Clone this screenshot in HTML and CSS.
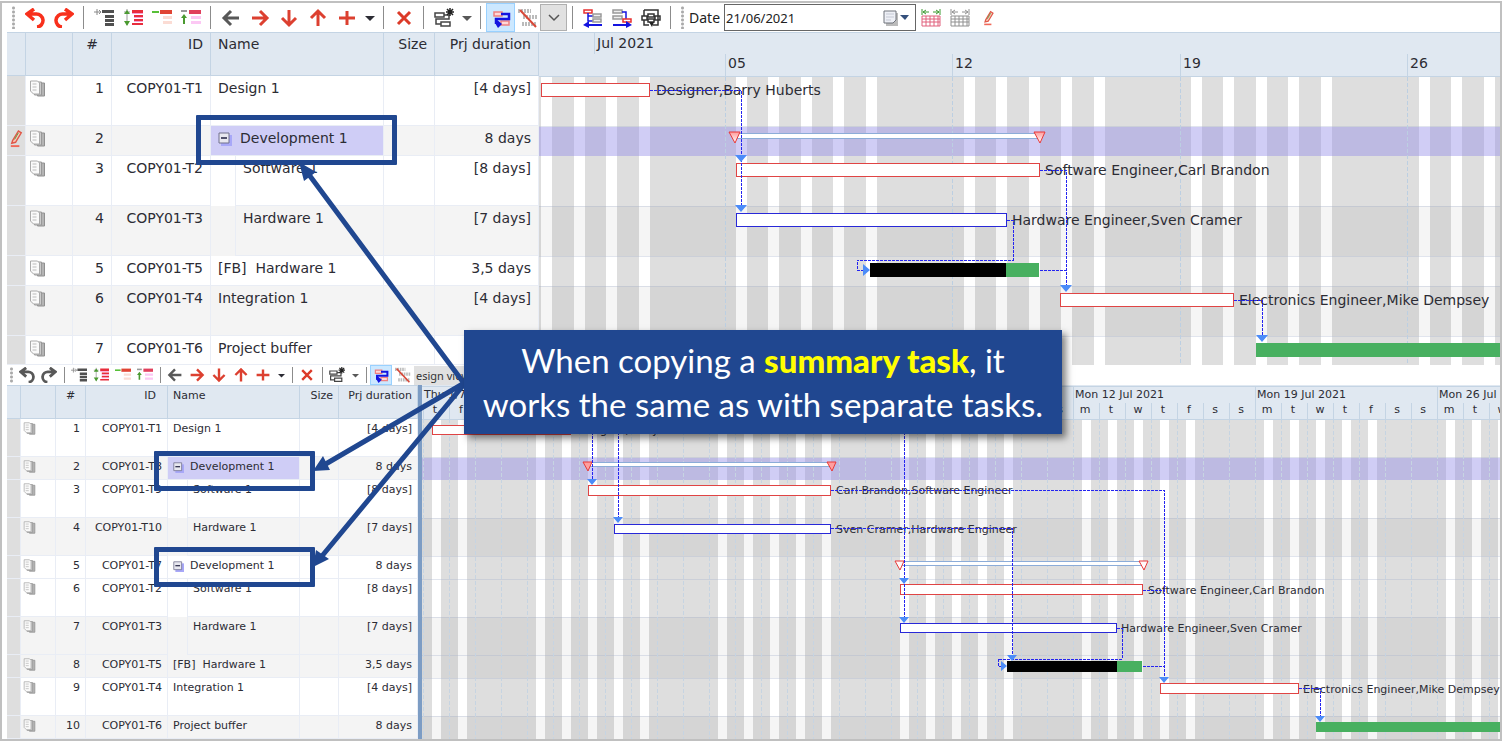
FILE: index.html
```html
<!DOCTYPE html>
<html lang="en">
<head>
<meta charset="utf-8">
<title>Copying a summary task</title>
<link rel="stylesheet" href="styles.css">
</head>
<body>
<svg class="sprite" aria-hidden="true">
  <symbol id="undo" viewBox="0 0 20 20"><path d="M9 1 2 6l7 6M2 6h9a6 6 0 0 1 1 13" fill="none" stroke="currentColor" stroke-width="3.500"/></symbol>
  <symbol id="redo" viewBox="0 0 20 20"><path d="m11 1 7 5-7 6M18 6H9a6 6 0 0 0-1 13" fill="none" stroke="currentColor" stroke-width="3.500"/></symbol>
  <symbol id="task-add" viewBox="0 0 20 20"><path d="M0 4h7M3 1v6M5 2l2 2-2 2" stroke="#888" fill="none"/><path d="M8 2h12v3H8zM11 7h9v3h-9zM11 11h9v3h-9zM11 15h9v3h-9z" fill="#505050"/></symbol>
  <symbol id="task-expand" viewBox="0 0 20 20"><path d="M1 4h6M4 1v16" stroke="#999" fill="none"/><path d="M4 2 1 6h6zM4 18l-3-5h6z" fill="#4a9a30"/><path d="M9 2h11v3H9zM11 7h9v2h-9zM11 11h9v2h-9zM9 15h11v2H9z" fill="#e82c3c"/><path d="M9 5h11v1H9zM11 9h9v1h-9zM11 13h9v1h-9z" fill="#f5a0d8"/></symbol>
  <symbol id="task-out" viewBox="0 0 20 20"><path d="M0 4h7" stroke="#58c038" stroke-width="2"/><path d="M8 2h12v4H8z" fill="#e04434"/><path d="M11 8h9v3h-9zM11 13h9v3h-9z" fill="#fbdcd4"/></symbol>
  <symbol id="task-up" viewBox="0 0 20 20"><path d="M0 3h6" stroke="#999" stroke-width="2"/><path d="M3 6 0 10h2v6h2v-6h2z" fill="#4a9a30"/><path d="M8 2h12v4H8z" fill="#e0405c"/><path d="M10 8h10v3H10zM10 13h10v3H10z" fill="#fcc8f4"/></symbol>
  <symbol id="arrow" viewBox="0 0 20 20"><path d="M3 10h15M10 3l-7 7 7 7" fill="none" stroke="currentColor" stroke-width="3"/></symbol>
  <symbol id="plus" viewBox="0 0 20 20"><path d="M2 10h16M10 3v14" stroke="currentColor" stroke-width="3"/></symbol>
  <symbol id="cross" viewBox="0 0 20 20"><path d="m4 4 12 12M16 4 4 16" stroke="#dc3a28" stroke-width="3"/></symbol>
  <symbol id="caret" viewBox="0 0 10 10"><path d="M0 3h10L5 8z" fill="currentColor"/></symbol>
  <symbol id="chain" viewBox="0 0 20 20"><path d="M1 5h9v4H1zM7 14h9v4H7zM10 7h5v4H2v5h5" fill="#fff" stroke="#444" stroke-width="1.500"/><path d="M16 0v8M12 4h8M13 1l6 6M19 1l-6 6" stroke="#222" stroke-width="1.500"/></symbol>
  <symbol id="links" viewBox="0 0 20 20"><path d="M3 4h8v4H3zM10 13h8v4h-8z" fill="#ffd8d8" stroke="#f08080" stroke-width="1.500"/><path d="M10 6h8v5H5v5" fill="none" stroke="#1414e0" stroke-width="2.500"/><path d="M4 15V10l7 6-4 4z" fill="#1414e0"/></symbol>
  <symbol id="strike" viewBox="0 0 20 20"><path d="M0 3h13M5 9h14M4 16h15" fill="none" stroke="#bbb" stroke-width="4" stroke-dasharray="2 1"/><path d="M2 2 18 19" stroke="#d84838" stroke-width="2"/></symbol>
  <symbol id="pred" viewBox="0 0 20 20"><path d="M1 2h8v3H1z" fill="#fff" stroke="#e83030" stroke-width="1.500"/><path d="M5 5v8h5M5 8h5" fill="none" stroke="#1414e0" stroke-width="1.500"/><path d="M10 6h8v3h-8zM10 11h8v3h-8z" fill="#eee" stroke="#999" stroke-width="1.500"/><path d="M4 17h15" stroke="#1414e0" stroke-width="2"/><path d="M6 13v7l-6-3z" fill="#1414e0"/></symbol>
  <symbol id="succ" viewBox="0 0 20 20"><path d="M1 2h9v3H1zM1 8h9v3H1z" fill="#eee" stroke="#999" stroke-width="1.500"/><path d="M10 4h4v7" fill="none" stroke="#1414e0" stroke-width="1.500"/><path d="M11 11h8v3h-8z" fill="#fff" stroke="#e83030" stroke-width="1.500"/><path d="M1 17h15" stroke="#1414e0" stroke-width="2"/><path d="M14 13v7l6-3z" fill="#1414e0"/></symbol>
  <symbol id="net" viewBox="0 0 20 20"><path d="M3 2h14v4M3 2v6M17 6v11h-5M3 12v5h5M1 8h5v4H1zM14 8h5v4h-5zM7 6h6v3H7zM7 11h6v3H7z" fill="none" stroke="#333" stroke-width="1.500"/><path d="M8 14h5l-2 5z" fill="#222"/></symbol>
  <symbol id="cal" viewBox="0 0 20 20"><path d="M1 8h18v10H1zM1 11h18M1 14h18M5 8v10M9 8v10M13 8v10M17 8v10" fill="none" stroke="currentColor"/></symbol>
  <symbol id="cal-arrows" viewBox="0 0 20 20"><path d="M1 1v6M19 1v6M2 4h6M12 4h6M5 2 2 4l3 2M15 2l3 2-3 2" fill="none" stroke="currentColor"/></symbol>
  <symbol id="pencil" viewBox="0 0 20 20"><path d="M6 12 12 2l3 2-6 10-4 1z" fill="#f8c8b8" stroke="#e05848" stroke-width="1.500"/><path d="M8 11l4-7" stroke="#5a9a40"/><path d="M4 18h9" stroke="#f06858" stroke-width="2"/></symbol>
  <symbol id="doc" viewBox="0 0 16 17"><path d="M8 3h7v13H8z" fill="#b4b4b4" stroke="#909090"/><path d="M5 2h7v13H5z" fill="#ccc" stroke="#999"/><path d="M1 1h7l2 2v11H4l-3-3z" fill="#fafafa" stroke="#aaa"/><path d="M3 4h4M3 7h4M3 10h4" stroke="#bbb"/></symbol>
  <symbol id="collapse" viewBox="0 0 14 14"><path d="M3 3h11v11H3z" fill="#a8a8f8"/><path d="M1 1h10v10H1z" fill="#e8e8f0" stroke="#70708c"/><path d="M3 6h6" stroke="#202040" stroke-width="1.500"/></symbol>
</svg>

<main class="frame">
  <section class="pane pane-large">
    <div class="toolbar">
      <span class="grip"></span>
      <button class="tool red" aria-label="Undo"><svg class="icon"><use href="#undo"/></svg></button>
      <button class="tool red" aria-label="Redo"><svg class="icon"><use href="#redo"/></svg></button>
      <span class="sep"></span>
      <button class="tool" aria-label="Insert task"><svg class="icon"><use href="#task-add"/></svg></button>
      <button class="tool" aria-label="Expand tasks"><svg class="icon"><use href="#task-expand"/></svg></button>
      <button class="tool" aria-label="Outdent task"><svg class="icon"><use href="#task-out"/></svg></button>
      <button class="tool" aria-label="Raise task"><svg class="icon"><use href="#task-up"/></svg></button>
      <span class="sep"></span>
      <button class="tool gray" aria-label="Left"><svg class="icon"><use href="#arrow"/></svg></button>
      <button class="tool brick" aria-label="Right"><svg class="icon turn-right"><use href="#arrow"/></svg></button>
      <button class="tool brick" aria-label="Down"><svg class="icon turn-down"><use href="#arrow"/></svg></button>
      <button class="tool brick" aria-label="Up"><svg class="icon turn-up"><use href="#arrow"/></svg></button>
      <button class="tool brick" aria-label="Add"><svg class="icon"><use href="#plus"/></svg></button>
      <button class="drop" aria-label="Add options"><svg class="caret"><use href="#caret"/></svg></button>
      <span class="sep"></span>
      <button class="tool" aria-label="Delete"><svg class="icon"><use href="#cross"/></svg></button>
      <span class="sep"></span>
      <button class="tool" aria-label="Add chain"><svg class="icon"><use href="#chain"/></svg></button>
      <button class="drop gray" aria-label="Chain options"><svg class="caret"><use href="#caret"/></svg></button>
      <span class="sep"></span>
      <button class="tool pressed" aria-label="Show links"><svg class="icon"><use href="#links"/></svg></button>
      <button class="tool slim" aria-label="Hide views"><svg class="icon"><use href="#strike"/></svg></button>
      <button class="chooser" aria-label="Choose view"><svg class="chev" viewBox="0 0 12 12"><path d="m1 3 5 5 5-5" fill="none" stroke="#555" stroke-width="1.500"/></svg></button>
      <span class="sep"></span>
      <button class="tool" aria-label="Predecessors"><svg class="icon"><use href="#pred"/></svg></button>
      <button class="tool" aria-label="Successors"><svg class="icon"><use href="#succ"/></svg></button>
      <button class="tool" aria-label="Network"><svg class="icon"><use href="#net"/></svg></button>
      <span class="sep"></span>
      <span class="grip"></span>
      <label class="date-label" for="date">Date</label>
      <span class="date-field">
        <input id="date" class="date-input" type="text" value="21/06/2021">
        <svg class="date-icon" viewBox="0 0 28 18"><path d="M4 4h12v13H4z" fill="#bbb"/><path d="M2 2h12v9l-3 3H2z" fill="#eef0f6" stroke="#70747c"/><path d="M4 5h8M4 8h8M4 11h5" stroke="#c4c8d4"/><path d="M18 6h9l-4 5z" fill="#34507c"/></svg>
      </span>
      <button class="tool" aria-label="Fit calendar"><svg class="icon"><g color="#e0607c"><use href="#cal"/></g><g color="#3a9a30"><use href="#cal-arrows"/></g></svg></button>
      <button class="tool gray-light" aria-label="Shrink calendar"><svg class="icon"><use href="#cal"/><use href="#cal-arrows"/></svg></button>
      <button class="tool" aria-label="Edit"><svg class="icon small"><use href="#pencil"/></svg></button>
    </div>
    <div class="split">
      <table class="tasks">
        <colgroup><col class="c-mark"><col class="c-doc"><col class="c-num"><col class="c-id"><col class="c-name"><col class="c-size"><col class="c-dur"></colgroup>
        <thead><tr><th></th><th></th><th class="mid">#</th><th class="end id-head">ID</th><th>Name</th><th class="end">Size</th><th class="end">Prj duration</th></tr></thead>
        <tbody>
          <tr class="tall"><td class="mark"></td><td class="doc"><svg><use href="#doc"/></svg></td><td class="end">1</td><td class="end">COPY01-T1</td><td>Design 1</td><td></td><td class="end">[4 days]</td></tr>
          <tr class="low alt"><td class="mark"><svg class="edit"><use href="#pencil"/></svg></td><td class="doc"><svg><use href="#doc"/></svg></td><td class="end">2</td><td></td><td class="picked"><button class="fold" aria-label="Collapse"><svg><use href="#collapse"/></svg></button>Development 1</td><td></td><td class="end">8 days</td></tr>
          <tr class="tall"><td class="mark"></td><td class="doc"><svg><use href="#doc"/></svg></td><td class="end">3</td><td class="end">COPY01-T2</td><td class="child"><div class="indent">Software 1</div></td><td></td><td class="end">[8 days]</td></tr>
          <tr class="tall alt"><td class="mark"></td><td class="doc"><svg><use href="#doc"/></svg></td><td class="end">4</td><td class="end">COPY01-T3</td><td class="child"><div class="indent">Hardware 1</div></td><td></td><td class="end">[7 days]</td></tr>
          <tr class="low"><td class="mark"></td><td class="doc"><svg><use href="#doc"/></svg></td><td class="end">5</td><td class="end">COPY01-T5</td><td>[FB]&nbsp; Hardware 1</td><td></td><td class="end">3,5 days</td></tr>
          <tr class="tall alt"><td class="mark"></td><td class="doc"><svg><use href="#doc"/></svg></td><td class="end">6</td><td class="end">COPY01-T4</td><td>Integration 1</td><td></td><td class="end">[4 days]</td></tr>
          <tr class="low last"><td class="mark"></td><td class="doc"><svg><use href="#doc"/></svg></td><td class="end">7</td><td class="end">COPY01-T6</td><td>Project buffer</td><td></td><td></td></tr>
        </tbody>
      </table>
      <svg class="chart" aria-label="Gantt chart">
        <g transform="translate(-539 -32)">
          <defs>
            <pattern id="weeks" x="725" y="76" width="455" height="20" patternUnits="userSpaceOnUse">
              <rect width="455" height="20" fill="#dedede"/>
              <path d="M11 0h11v20H11zM43 0h11v20H43zM76 0h11v20H76zM108 0h11v20h-11zM141 0h11v20h-11zM239 0h11v20h-11zM271 0h11v20h-11zM304 0h11v20h-11zM336 0h11v20h-11zM369 0h11v20h-11z" fill="#fff"/>
            </pattern>
            <linearGradient id="mark-fill" x2="0" y2="1"><stop stop-color="#ff9c9c"/><stop offset="1" stop-color="#fff"/></linearGradient>
          </defs>
          <rect class="band" x="539" y="32" width="4000" height="44"/>
          <path class="rule" d="M539 32h4000M539 76h4000M594 33v21M725 54v22M952 54v22M1180 54v22M1407 54v22"/>
          <text x="597" y="48">Jul 2021</text><text x="728" y="68">05</text><text x="955" y="68">12</text><text x="1183" y="68">19</text><text x="1410" y="68">26</text>
          <rect x="539" y="77" width="4000" height="288" fill="url(#weeks)"/>
          <path class="shade" d="M539 206h4000v50H539zM539 286h4000v50H539z"/>
          <rect class="chosen" x="539" y="127" width="4000" height="29"/>
          <path class="row-line" d="M539 126h4000M539 206h4000M539 256h4000M539 286h4000M539 336h4000"/>
          <path class="day-line" d="M725 77v288M952 77v288M1180 77v288M1407 77v288"/>
          <g class="bars">
            <rect class="critical" x="541" y="83" width="108" height="13"/>
            <path class="summary" d="M735 133h304v5H735z"/>
            <path class="marker" d="M729 132h11l-5 11zM1034 132h11l-5 11z"/>
            <rect class="critical" x="736" y="163" width="303" height="13"/>
            <rect class="normal" x="736" y="213" width="270" height="13"/>
            <rect x="870" y="263" width="136" height="14"/>
            <rect class="buffer" x="1006" y="263" width="33" height="14"/>
            <rect class="critical" x="1060" y="293" width="173" height="13"/>
            <rect class="buffer" x="1256" y="343" width="3000" height="14"/>
          </g>
          <text x="656" y="95">Designer,Barry Huberts</text><text x="1045" y="175">Software Engineer,Carl Brandon</text><text x="1012" y="225">Hardware Engineer,Sven Cramer</text><text x="1239" y="305">Electronics Engineer,Mike Dempsey</text>
          <path class="link" d="M650 90h91v116M1040 170h26v116M1007 220h6v40H857v10h6M1040 270h26M1234 300h28v36"/>
          <path class="tip" d="M735 155h12l-6 7zM735 205h12l-6 7zM1060 285h12l-6 7zM1256 335h12l-6 7zM863 264v12l7-6z"/>
        </g>
      </svg>
    </div>
  </section>

  <section class="pane pane-small">
    <div class="toolbar">
      <span class="grip"></span>
      <button class="tool gray" aria-label="Undo"><svg class="icon"><use href="#undo"/></svg></button>
      <button class="tool gray" aria-label="Redo"><svg class="icon"><use href="#redo"/></svg></button>
      <span class="sep"></span>
      <button class="tool" aria-label="Insert task"><svg class="icon"><use href="#task-add"/></svg></button>
      <button class="tool" aria-label="Expand tasks"><svg class="icon"><use href="#task-expand"/></svg></button>
      <button class="tool" aria-label="Outdent task"><svg class="icon"><use href="#task-out"/></svg></button>
      <button class="tool" aria-label="Raise task"><svg class="icon"><use href="#task-up"/></svg></button>
      <span class="sep"></span>
      <button class="tool gray" aria-label="Left"><svg class="icon"><use href="#arrow"/></svg></button>
      <button class="tool brick" aria-label="Right"><svg class="icon turn-right"><use href="#arrow"/></svg></button>
      <button class="tool brick" aria-label="Down"><svg class="icon turn-down"><use href="#arrow"/></svg></button>
      <button class="tool brick" aria-label="Up"><svg class="icon turn-up"><use href="#arrow"/></svg></button>
      <button class="tool brick" aria-label="Add"><svg class="icon"><use href="#plus"/></svg></button>
      <button class="drop" aria-label="Add options"><svg class="caret"><use href="#caret"/></svg></button>
      <span class="sep"></span>
      <button class="tool" aria-label="Delete"><svg class="icon"><use href="#cross"/></svg></button>
      <span class="sep"></span>
      <button class="tool" aria-label="Add chain"><svg class="icon"><use href="#chain"/></svg></button>
      <button class="drop gray" aria-label="Chain options"><svg class="caret"><use href="#caret"/></svg></button>
      <span class="sep"></span>
      <button class="tool pressed" aria-label="Show links"><svg class="icon"><use href="#links"/></svg></button>
      <button class="tool" aria-label="Hide views"><svg class="icon"><use href="#strike"/></svg></button>
      <select class="view" aria-label="View"><option>esign view</option></select>
    </div>
    <div class="split">
      <table class="tasks">
        <colgroup><col class="c-mark"><col class="c-doc"><col class="c-num"><col class="c-id"><col class="c-name"><col class="c-size"><col class="c-dur"></colgroup>
        <thead><tr><th></th><th></th><th class="mid">#</th><th class="end id-head">ID</th><th>Name</th><th class="end">Size</th><th class="end">Prj duration</th></tr></thead>
        <tbody>
          <tr class="tall"><td class="mark"></td><td class="doc"><svg><use href="#doc"/></svg></td><td class="end">1</td><td class="end">COPY01-T1</td><td>Design 1</td><td></td><td class="end">[4 days]</td></tr>
          <tr class="low alt"><td class="mark"></td><td class="doc"><svg><use href="#doc"/></svg></td><td class="end">2</td><td class="end">COPY01-T8</td><td class="picked"><button class="fold" aria-label="Collapse"><svg><use href="#collapse"/></svg></button>Development 1</td><td></td><td class="end">8 days</td></tr>
          <tr class="tall"><td class="mark"></td><td class="doc"><svg><use href="#doc"/></svg></td><td class="end">3</td><td class="end">COPY01-T9</td><td class="child"><div class="indent">Software 1</div></td><td></td><td class="end">[8 days]</td></tr>
          <tr class="tall alt"><td class="mark"></td><td class="doc"><svg><use href="#doc"/></svg></td><td class="end">4</td><td class="end">COPY01-T10</td><td class="child"><div class="indent">Hardware 1</div></td><td></td><td class="end">[7 days]</td></tr>
          <tr class="low"><td class="mark"></td><td class="doc"><svg><use href="#doc"/></svg></td><td class="end">5</td><td class="end">COPY01-T7</td><td><button class="fold" aria-label="Collapse"><svg><use href="#collapse"/></svg></button>Development 1</td><td></td><td class="end">8 days</td></tr>
          <tr class="tall"><td class="mark"></td><td class="doc"><svg><use href="#doc"/></svg></td><td class="end">6</td><td class="end">COPY01-T2</td><td class="child"><div class="indent">Software 1</div></td><td></td><td class="end">[8 days]</td></tr>
          <tr class="tall alt"><td class="mark"></td><td class="doc"><svg><use href="#doc"/></svg></td><td class="end">7</td><td class="end">COPY01-T3</td><td class="child"><div class="indent">Hardware 1</div></td><td></td><td class="end">[7 days]</td></tr>
          <tr class="low alt"><td class="mark"></td><td class="doc"><svg><use href="#doc"/></svg></td><td class="end">8</td><td class="end">COPY01-T5</td><td>[FB]&nbsp; Hardware 1</td><td></td><td class="end">3,5 days</td></tr>
          <tr class="tall"><td class="mark"></td><td class="doc"><svg><use href="#doc"/></svg></td><td class="end">9</td><td class="end">COPY01-T4</td><td>Integration 1</td><td></td><td class="end">[4 days]</td></tr>
          <tr class="low alt"><td class="mark"></td><td class="doc"><svg><use href="#doc"/></svg></td><td class="end">10</td><td class="end">COPY01-T6</td><td>Project buffer</td><td></td><td class="end">8 days</td></tr>
        </tbody>
      </table>
      <div class="splitter"></div>
      <svg class="chart" aria-label="Gantt chart">
        <g transform="translate(-422 -385)">
          <defs>
            <pattern id="days" x="527" y="419" width="182" height="20" patternUnits="userSpaceOnUse">
              <rect width="182" height="20" fill="#dedede"/>
              <path d="M9 0h9v20H9zM35 0h9v20h-9zM61 0h9v20h-9zM87 0h9v20h-9zM113 0h9v20h-9z" fill="#fff"/>
            </pattern>
            <pattern id="ticks" x="527" y="419" width="26" height="6" patternUnits="userSpaceOnUse"><rect width="1" height="4" fill="#c6d4e2"/></pattern>
            <pattern id="head-ticks" x="527" y="403" width="26" height="16" patternUnits="userSpaceOnUse"><rect width="1" height="16" fill="#c4d4e4"/></pattern>
          </defs>
          <rect class="band" x="422" y="385" width="4000" height="34"/>
          <rect x="422" y="403" width="4000" height="16" fill="url(#head-ticks)"/>
          <path class="rule" d="M422 386h4000M422 419h4000M527 386v33M709 386v33M891 386v33M1073 386v33M1255 386v33M1437 386v33"/>
          <text x="424" y="398">Thu 1/7</text><text x="1075" y="398">Mon 12 Jul 2021</text><text x="1257" y="398">Mon 19 Jul 2021</text><text x="1439" y="398">Mon 26 Jul</text>
          <g class="letters"><text x="435" y="413">t</text><text x="461" y="413">f</text><text x="1060" y="413">s</text><text x="1085" y="413">m</text><text x="1111" y="413">t</text><text x="1138" y="413">w</text><text x="1163" y="413">t</text><text x="1189" y="413">f</text><text x="1215" y="413">s</text><text x="1241" y="413">s</text><text x="1267" y="413">m</text><text x="1293" y="413">t</text><text x="1320" y="413">w</text><text x="1345" y="413">t</text><text x="1371" y="413">f</text><text x="1397" y="413">s</text><text x="1423" y="413">s</text><text x="1449" y="413">m</text><text x="1475" y="413">t</text><text x="1502" y="413">w</text></g>
          <rect x="422" y="420" width="4000" height="319" fill="url(#days)"/>
          <path class="shade" d="M422 518h4000v38H422zM422 617h4000v61H422zM422 716h4000v23H422z"/>
          <rect class="chosen" x="422" y="458" width="4000" height="22"/>
          <path class="row-line" d="M422 457h4000M422 518h4000M422 556h4000M422 579h4000M422 617h4000M422 655h4000M422 678h4000M422 716h4000"/>
          <rect x="422" y="420" width="4000" height="319" fill="url(#ticks)"/>
          <g class="bars">
            <rect class="critical" x="432" y="425" width="138" height="9"/>
            <path class="summary" d="M587 462h244v4H587zM899 561h244v4H899z"/>
            <path class="marker" d="M583 462h9l-4 9zM827 462h9l-4 9zM895 561h9l-4 9zM1139 561h9l-4 9z"/>
            <rect class="critical" x="588" y="485" width="242" height="10"/>
            <rect class="normal" x="614" y="524" width="216" height="9"/>
            <rect class="critical" x="900" y="584" width="242" height="10"/>
            <rect class="normal" x="900" y="623" width="216" height="9"/>
            <rect x="1007" y="661" width="110" height="11"/>
            <rect class="buffer" x="1117" y="661" width="25" height="11"/>
            <rect class="critical" x="1160" y="683" width="138" height="10"/>
            <rect class="buffer" x="1316" y="722" width="3000" height="10"/>
          </g>
          <text x="576" y="434">Designer,Barry Huberts</text><text x="836" y="494">Carl Brandon,Software Engineer</text><text x="836" y="533">Sven Cramer,Hardware Engineer</text><text x="1148" y="594">Software Engineer,Carl Brandon</text><text x="1121" y="632">Hardware Engineer,Sven Cramer</text><text x="1303" y="693">Electronics Engineer,Mike Dempsey</text>
          <path class="link" d="M592 420v60M618 420v98M904 420v198M831 490h333v188M831 528h181v128M1143 590h21M1117 628h5v31H998v7h4M1143 666h21M1299 688h21v29"/>
          <path class="tip" d="M587 479h10l-5 6zM613 517h10l-5 6zM899 578h10l-5 6zM899 617h10l-5 6zM1159 677h10l-5 6zM1007 655h10l-5 6zM1315 716h10l-5 6zM1001 661v10l6-5z"/>
        </g>
      </svg>
    </div>
  </section>

  <svg class="pointers" aria-hidden="true">
    <g fill="none" stroke="#204790" stroke-width="5"><path d="M466 386 307 172M466 382 324 465M466 382 322 556"/></g>
    <g fill="#204790"><path d="m299 162 17 10-12 9zM313 471l10-15 7 14zM313 567l3-17 13 9z"/></g>
  </svg>
  <div class="outline outline-a"></div>
  <div class="outline outline-b"></div>
  <div class="outline outline-c"></div>
  <aside class="callout">When copying a <strong>summary task</strong>, it<br>works the same as with separate tasks.</aside>
</main>
</body>
</html>
```
FILE: styles.css
```css
* { box-sizing: border-box; }

body {
  margin: 0;
  background: #fff;
  color: #2c2c34;
  font-family: "DejaVu Sans", Verdana, sans-serif;
}

button {
  margin: 0;
  padding: 0;
  border: 0;
  background: none;
  color: inherit;
}

.sprite { position: absolute; width: 0; height: 0; }

.frame {
  position: relative;
  margin-top: 1px;
  padding-left: 5px;
  border: 2px solid #c0c0c0;
  overflow: hidden;
}

/* Both panes share their parts; only these sizes differ. */
.pane { font-size: var(--text); }
.pane-large {
  --text: 14px; --line: 24px; --head-line: 22px; --bar: 29px; --btn: 29px; --sep: 11px; --drop: 17px;
  --icon: 20px; --head: 44px; --tall: 50px; --low: 30px; --pad: 7px; --indent: 24px;
  --doc: 17px; --fold: 14px; --fold-gap: 8px; --tiny: 10px; --id-pad: 7px;
}
.pane-small {
  --text: 11px; --line: 19px; --head-line: 19px; --bar: 20px; --btn: 22px; --sep: 8px; --drop: 14px;
  --icon: 16px; --head: 34px; --tall: 38px; --low: 23px; --pad: 5px; --indent: 19px;
  --doc: 13px; --fold: 11px; --fold-gap: 6px; --tiny: 7px; --id-pad: 11px;
}

.toolbar {
  display: flex;
  align-items: center;
  height: var(--bar);
  background: #fff;
}
.grip {
  flex: none;
  width: 3px;
  height: 80%;
  margin: 0 5px;
  background: radial-gradient(circle, #aaa 1px, transparent 2px) 0 0 / 3px 4px;
}
.pane-small .grip { margin: 0 3px; }
.tool {
  display: flex;
  flex: none;
  align-items: center;
  justify-content: center;
  width: var(--btn);
  height: 100%;
}
.tool.slim { width: 25px; }
.icon { width: var(--icon); height: var(--icon); }
.icon.small { width: 16px; height: 16px; }
.turn-right { transform: rotate(180deg); }
.turn-down { transform: rotate(270deg); }
.turn-up { transform: rotate(90deg); }
.red { color: #f8301c; }
.brick { color: #dc4030; }
.gray { color: #585858; }
.gray-light { color: #909090; }
.pressed { background: #cce8ff; border: 1px solid #99d1ff; }
.sep { flex: none; width: var(--sep); height: 80%; background: linear-gradient(#8c8c8c, #8c8c8c) center / 1px 100% no-repeat; }
.drop { display: flex; flex: none; align-items: center; justify-content: center; width: var(--drop); height: 100%; }
.caret { width: var(--tiny); height: var(--tiny); }
.chooser { display: flex; align-items: center; justify-content: center; width: 27px; height: 27px; background: #e1e1e1; border: 1px solid #b0b0b0; }
.chev { width: 12px; height: 12px; }
.date-label { width: 35px; font: 14px "Noto Sans", sans-serif; color: #222; }
.date-field { display: flex; align-items: center; width: 192px; height: 27px; border: 1px solid #666; background: #fff; }
.date-input { flex: 1; min-width: 0; padding: 0 1px; border: 0; outline: 0; font: 13px "Noto Sans", sans-serif; color: #222; }
.date-icon { width: 28px; height: 18px; margin-right: 5px; }
.view { width: 90px; height: 19px; padding: 0 2px; border: 0; appearance: none; background: #e1e1e1; color: #333; font: 11px "Noto Sans", sans-serif; }

.split { display: flex; }

.tasks {
  flex: none;
  table-layout: fixed;
  border-collapse: separate;
  border-spacing: 0;
  font-size: var(--text);
  line-height: var(--line);
}
.pane-large .tasks { width: 532px; }
.pane-large .c-mark { width: 19px; }
.pane-large .c-doc { width: 47px; }
.pane-large .c-num { width: 39px; }
.pane-large .c-id { width: 99px; }
.pane-large .c-name { width: 173px; }
.pane-large .c-size { width: 51px; }
.pane-large .c-dur { width: 104px; }
.pane-small .tasks { width: 411px; }
.pane-small .c-mark { width: 14px; }
.pane-small .c-doc { width: 35px; }
.pane-small .c-num { width: 30px; }
.pane-small .c-id { width: 82px; }
.pane-small .c-name { width: 132px; }
.pane-small .c-size { width: 39px; }
.pane-small .c-dur { width: 79px; }

.tasks th, .tasks td {
  padding: 0 var(--pad);
  text-align: left;
  vertical-align: top;
  font-weight: 400;
  white-space: nowrap;
  border-right: 1px solid #e9edf5;
  border-bottom: 1px solid #e9edf5;
}
.tasks th {
  height: var(--head);
  line-height: var(--head-line);
  background: #e0e8f1;
  border-color: #c4d4e4;
  border-top: 1px solid #c4d4e4;
}
.tasks .end { text-align: right; }
.tasks .mid { text-align: center; }
.tasks th.id-head { padding-right: var(--id-pad); }
.tall td { height: var(--tall); }
.low td { height: var(--low); }
.low.last td { height: 29px; }
.alt td { background: #f4f4f4; }
.tasks td.mark { padding: 0; background: #dedede; }
.tasks td.picked { background: #cfcdf6; }
.tasks td.doc { padding: 4px 3px; line-height: 0; }
.pane-small .tasks td.doc { padding: 3px 2px; }
.doc svg { width: var(--doc); height: var(--doc); }
.edit { display: block; width: 19px; height: 19px; margin-top: 3px; }
.fold { margin-right: var(--fold-gap); line-height: 0; vertical-align: middle; }
.fold svg { width: var(--fold); height: var(--fold); }
.tasks td.child { padding: 0; border-bottom: 0; }
.indent {
  height: var(--tall);
  margin-left: var(--indent);
  padding-left: var(--pad);
  border-left: 1px solid #e9edf5;
  border-bottom: 1px solid #e9edf5;
}

.splitter { flex: none; width: 4px; background: #7c9cc4; }

.chart { flex: 1; min-width: 0; overflow: hidden; shape-rendering: crispEdges; fill: #000; }
.chart text { fill: #2c2c34; font-size: var(--text); }
.letters { text-anchor: middle; }
.band { fill: #e0e8f1; }
.rule { stroke: #c4d4e4; fill: none; }
.shade { fill: rgba(0, 0, 0, .04); }
.chosen { fill: rgba(142, 137, 231, .42); }
.row-line { stroke: rgba(170, 180, 205, .35); }
.day-line { stroke: #bccfe2; stroke-dasharray: 4 2; }
.critical { fill: #fff; stroke: #e04444; }
.normal { fill: #fff; stroke: #2828d8; }
.buffer { fill: #48b060; }
.summary { fill: #fff; stroke: #8cacd8; }
.marker { fill: url(#mark-fill); stroke: #e83838; shape-rendering: auto; }
.link { fill: none; stroke: #2424f0; stroke-dasharray: 3 1; }
.tip { fill: #4c8cf8; shape-rendering: auto; }

/* Annotations drawn over the two panes */
.pointers { position: absolute; left: -2px; top: -3px; width: 500px; height: 600px; }
.outline { position: absolute; border: 5px solid #204790; border-radius: 1px; }
.outline-a { left: 194px; top: 112px; width: 201px; height: 50px; }
.outline-b { left: 152px; top: 448px; width: 161px; height: 40px; }
.outline-c { left: 152px; top: 544px; width: 161px; height: 40px; }
.callout {
  position: absolute;
  left: 462px;
  top: 327px;
  width: 598px;
  padding: 8px 0;
  background: #204790;
  color: #fff;
  font: 33px/44px Lato, "Century Gothic", sans-serif;
  text-align: center;
  white-space: nowrap;
  box-shadow: 4px 4px 7px rgba(0, 0, 0, .5);
}
.callout strong { color: #ff0; font-weight: 900; }
```
